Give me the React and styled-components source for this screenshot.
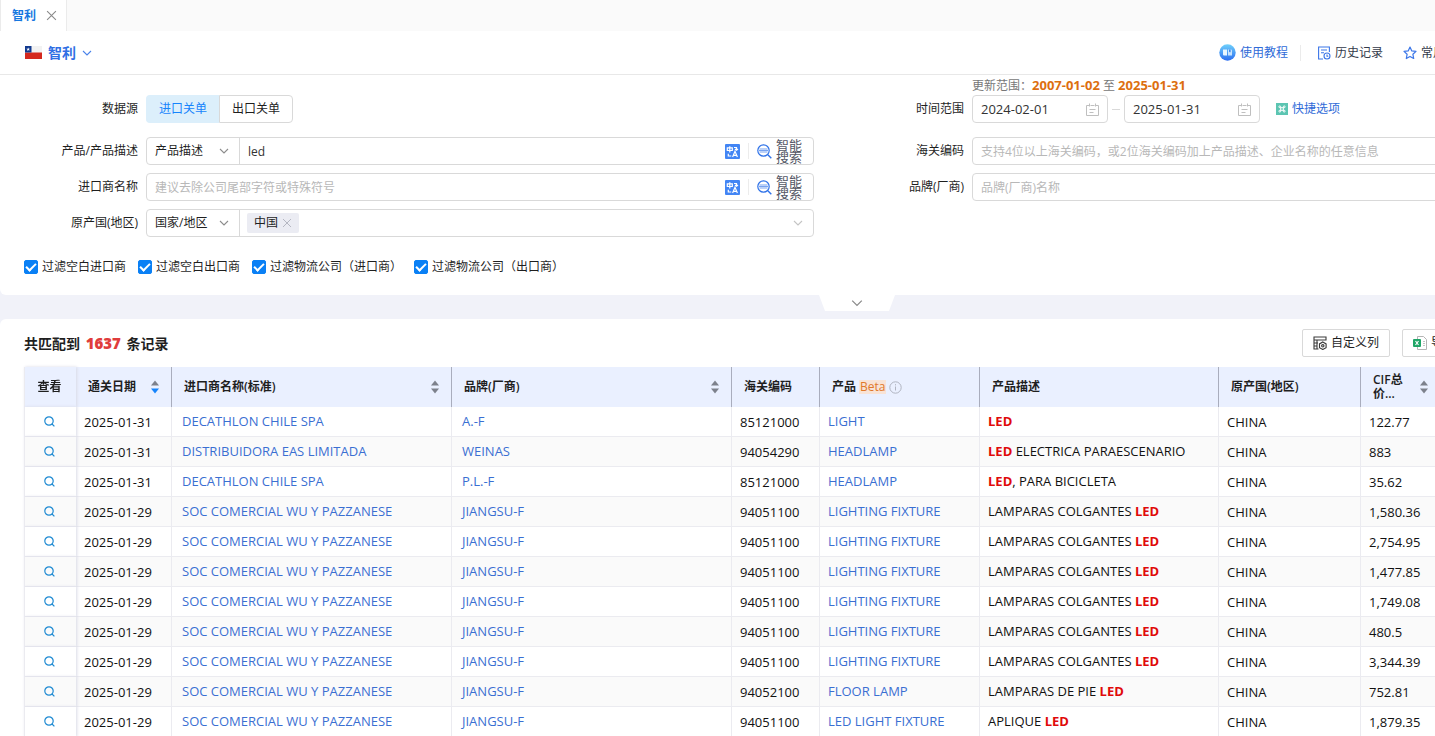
import { useState } from "react";
import styled, { createGlobalStyle, css } from "styled-components";

const records = [
  ["2025-01-31", "DECATHLON CHILE SPA", "A.-F", "85121000", "LIGHT", "[LED]", "122.77"],
  ["2025-01-31", "DISTRIBUIDORA EAS LIMITADA", "WEINAS", "94054290", "HEADLAMP", "[LED] ELECTRICA PARAESCENARIO", "883"],
  ["2025-01-31", "DECATHLON CHILE SPA", "P.L.-F", "85121000", "HEADLAMP", "[LED], PARA BICICLETA", "35.62"],
  ["2025-01-29", "SOC COMERCIAL WU Y PAZZANESE", "JIANGSU-F", "94051100", "LIGHTING FIXTURE", "LAMPARAS COLGANTES [LED]", "1,580.36"],
  ["2025-01-29", "SOC COMERCIAL WU Y PAZZANESE", "JIANGSU-F", "94051100", "LIGHTING FIXTURE", "LAMPARAS COLGANTES [LED]", "2,754.95"],
  ["2025-01-29", "SOC COMERCIAL WU Y PAZZANESE", "JIANGSU-F", "94051100", "LIGHTING FIXTURE", "LAMPARAS COLGANTES [LED]", "1,477.85"],
  ["2025-01-29", "SOC COMERCIAL WU Y PAZZANESE", "JIANGSU-F", "94051100", "LIGHTING FIXTURE", "LAMPARAS COLGANTES [LED]", "1,749.08"],
  ["2025-01-29", "SOC COMERCIAL WU Y PAZZANESE", "JIANGSU-F", "94051100", "LIGHTING FIXTURE", "LAMPARAS COLGANTES [LED]", "480.5"],
  ["2025-01-29", "SOC COMERCIAL WU Y PAZZANESE", "JIANGSU-F", "94051100", "LIGHTING FIXTURE", "LAMPARAS COLGANTES [LED]", "3,344.39"],
  ["2025-01-29", "SOC COMERCIAL WU Y PAZZANESE", "JIANGSU-F", "94052100", "FLOOR LAMP", "LAMPARAS DE PIE [LED]", "752.81"],
  ["2025-01-29", "SOC COMERCIAL WU Y PAZZANESE", "JIANGSU-F", "94051100", "LED LIGHT FIXTURE", "APLIQUE [LED]", "1,879.35"],
];

const filters = ["过滤空白进口商", "过滤空白出口商", "过滤物流公司（进口商）", "过滤物流公司（出口商）"];

const columnWidths = [52, 96, 280, 280, 88, 160, 239, 142, 80];

/* icons */

const Chevron = ({ color = "#8c8c8c", size = 10 }) => (
  <svg width={size} height={size} viewBox="0 0 10 10" fill="none" stroke={color} strokeWidth="1.1" aria-hidden="true">
    <path d="M1 3l4 4 4-4" />
  </svg>
);

const CloseIcon = ({ color, size }) => (
  <svg width={size} height={size} viewBox="0 0 10 10" fill="none" stroke={color} strokeWidth="1" aria-hidden="true">
    <path d="M1 1l8 8M9 1l-8 8" />
  </svg>
);

const ChileFlag = () => (
  <svg width="17" height="13" viewBox="0 0 17 13" aria-hidden="true">
    <path fill="#f2f2f2" d="M0 0h17v7H0z" />
    <path fill="#d4281e" d="M0 6.5h17V13H0z" />
    <path fill="#123a8f" d="M0 0h6.5v6.5H0z" />
    <path fill="#fff" d="M3.2 1.4l.5 1.3h1.4l-1.1.9.4 1.3-1.2-.8-1.2.8.4-1.3-1.1-.9h1.4z" />
  </svg>
);

const TutorialIcon = () => (
  <svg width="17" height="17" viewBox="0 0 17 17" aria-hidden="true">
    <defs>
      <linearGradient id="tutorial" x1="0" y1="0" x2="0" y2="1">
        <stop offset="0" stopColor="#6fd0fb" />
        <stop offset="1" stopColor="#2b6df0" />
      </linearGradient>
    </defs>
    <circle cx="8.5" cy="8.5" r="8.2" fill="url(#tutorial)" />
    <path fill="#e8f6ff" d="M4 5.5h4v6H5a1 1 0 0 1-1-1z" />
    <path fill="#e8f6ff" fillOpacity=".8" d="M9 5.5h3a1 1 0 0 1 1 1v5H9z" />
    <path fill="#3c86f2" d="M10 5.500h1.600v3l-.8-.7-.8.7z" />
  </svg>
);

const HistoryIcon = () => (
  <svg width="14" height="14" viewBox="0 0 14 14" fill="none" stroke="#3b76e8" strokeWidth="1.1" aria-hidden="true">
    <path d="M12.4 6V1H1.6v12H6M4 4h6M4 6.800h3" />
    <circle cx="10" cy="10" r="3" />
    <path d="M10 8.500V10.200h1.300" />
  </svg>
);

const StarIcon = () => (
  <svg width="14" height="14" viewBox="0 0 14 14" fill="none" stroke="#3b76e8" strokeWidth="1.2" strokeLinejoin="round" aria-hidden="true">
    <path d="M7 1l1.800 3.900 4.200.5-3.100 2.900.8 4.200L7 10.400l-3.700 2.100.8-4.200L1 5.400l4.200-.5z" />
  </svg>
);

const CalendarIcon = () => (
  <svg width="13" height="13" viewBox="0 0 13 13" fill="none" stroke="#bfbfbf" strokeWidth="1" aria-hidden="true">
    <path d="M3 2.500H.5v10h12v-10H10M4.500 2.500h4M3.500.5v3M9.500.5v3M3.500 6.500h6M3.500 9.500h4" />
  </svg>
);

const ShortcutIcon = () => (
  <svg width="12" height="12" viewBox="0 0 12 12" aria-hidden="true">
    <path fill="#5cc5b2" d="M0 0h12v12H0z" />
    <g fill="none" stroke="#fff" strokeWidth="1">
      <path d="M4.700 4.700h2.600v2.600H4.700z" />
      <path d="M4.700 4.700H3.900a.9.9 0 1 1 .8-.8zM7.300 4.700h.8a.9.9 0 1 0-.8-.8zM4.700 7.300h-.8a.9.9 0 1 0 .8.8zM7.300 7.300h.8a.9.9 0 1 1-.8.8z" />
    </g>
  </svg>
);

const TranslateIcon = () => (
  <svg width="15" height="15" viewBox="0 0 15 15" aria-hidden="true">
    <rect width="15" height="15" rx="1" fill="#4285f4" />
    <g fill="none" stroke="#fff" strokeWidth="1.2">
      <path d="M2.300 3.800h5v2.700h-5zM4.800 2.300V8.500M9 3.500h2.500V6M10 5l1.500 1.300L13 5M3.300 9.800v2.200h3" />
      <path d="M7.600 13L10 7.300 12.400 13M8.400 11.300h3.200" />
    </g>
  </svg>
);

const SmartSearchIcon = () => (
  <svg width="15" height="15" viewBox="0 0 15 15" fill="none" stroke="#2f72e8" aria-hidden="true">
    <circle cx="6.500" cy="6.500" r="5.700" strokeWidth="1.200" />
    <path strokeWidth="1.400" d="M10.800 10.800L14.300 14.300" />
    <path strokeWidth="1" d="M2.500 5h8M2 6.500h9M2.500 8h8" strokeOpacity=".65" />
  </svg>
);

const ColumnsIcon = () => (
  <svg width="14" height="14" viewBox="0 0 14 14" fill="none" stroke="#3a3a3a" strokeWidth="1.1" aria-hidden="true">
    <path d="M13 4.500V1H1v12h4.500M1 4h12M4 4v9M1 7h4M1 10h3.500" />
    <path d="M9.800 6l3.300 1.900v3.800L9.800 13.500 6.500 11.700V7.900z" />
    <circle cx="9.800" cy="9.800" r="1.200" />
  </svg>
);

const ExcelIcon = () => (
  <svg width="14" height="14" viewBox="0 0 14 14" aria-hidden="true">
    <path fill="#fff" stroke="#b5b5b5" d="M4.500.5h6l3 3v10h-9z" />
    <path stroke="#c4c4c4" d="M10 5.500h2M10 7.500h2M10 9.500h2" />
    <rect y="3" width="8" height="8" rx="1" fill="#1fa567" />
    <path stroke="#fff" strokeWidth="1.2" d="M2.500 5l3 4M5.500 5l-3 4" />
  </svg>
);

const InfoIcon = () => (
  <svg width="13" height="13" viewBox="0 0 13 13" fill="none" stroke="#b0b4c0" aria-hidden="true">
    <circle cx="6.500" cy="6.500" r="5.700" />
    <path d="M6.500 3.200v1.200M6.500 5.500v4" />
  </svg>
);

const SearchIcon = () => (
  <svg width="11" height="11" viewBox="0 0 11 11" fill="none" stroke="#1e8ad2" strokeWidth="1.2" aria-hidden="true">
    <circle cx="5" cy="5" r="4.200" />
    <path d="M8 8l2.400 2.400" />
  </svg>
);

const SortIcon = ({ active }) => (
  <svg width="8" height="14" viewBox="0 0 8 14" aria-hidden="true">
    <path fill="#7d818c" d="M4 .5l4 5H0z" />
    <path fill={active ? "#1684fc" : "#7d818c"} d="M4 13.500l4-5H0z" />
  </svg>
);

/* small composed parts */

const SmartInput = ({ id, prefix, value, placeholder }) => (
  <FieldBox>
    {prefix}
    <TextInput id={id} defaultValue={value} placeholder={placeholder} />
    <InputTools>
      <IconButton aria-label="翻译"><TranslateIcon /></IconButton>
      <ToolLine />
      <SmartButton>
        <SmartSearchIcon />
        <span>智能<br />搜索</span>
      </SmartButton>
    </InputTools>
  </FieldBox>
);

const PrefixSelect = ({ label, option }) => (
  <SelectWrap>
    <Select aria-label={label} defaultValue={option}>
      <option>{option}</option>
    </Select>
    <Chevron />
  </SelectWrap>
);

const DateField = ({ id, label, value }) => (
  <DateBox>
    <TextInput id={id} aria-label={label} defaultValue={value} $date />
    <CalendarIcon />
  </DateBox>
);

const Highlighted = ({ text }) =>
  text.split(/(\[.*?\])/).map((part, i) =>
    part.startsWith("[") ? <Mark key={i}>{part.slice(1, -1)}</Mark> : part
  );

const App = () => {
  const [source, setSource] = useState("import");

  return (
    <>
      <GlobalStyle />
      <Shell>
        <Page>
          <TabBar>
            <Tab>
              <a href="#chile">智利</a>
              <IconButton aria-label="关闭"><CloseIcon color="#8a8a8a" size={11} /></IconButton>
            </Tab>
          </TabBar>

          <Header>
            <CountryButton>
              <ChileFlag />
              智利
              <Chevron color="#4a83ea" />
            </CountryButton>
            <HeaderActions>
              <HeaderLink href="#tutorial" $blue><TutorialIcon />使用教程</HeaderLink>
              <HeaderLine />
              <HeaderLink href="#history"><HistoryIcon />历史记录</HeaderLink>
              <HeaderLink href="#saved"><StarIcon />常用</HeaderLink>
            </HeaderActions>
          </Header>

          <SearchPanel>
            <FormGrid>
              <FormColumn $offset>
                <FormRow $first>
                  <Label as="span">数据源</Label>
                  <Segment>
                    <SegmentButton $active={source === "import"} onClick={() => setSource("import")}>进口关单</SegmentButton>
                    <SegmentButton $active={source === "export"} onClick={() => setSource("export")}>出口关单</SegmentButton>
                  </Segment>
                </FormRow>
                <FormRow>
                  <Label htmlFor="product">产品/产品描述</Label>
                  <SmartInput id="product" value="led" prefix={<PrefixSelect label="产品字段" option="产品描述" />} />
                </FormRow>
                <FormRow>
                  <Label htmlFor="importer">进口商名称</Label>
                  <SmartInput id="importer" placeholder="建议去除公司尾部字符或特殊符号" />
                </FormRow>
                <FormRow>
                  <Label htmlFor="origin">原产国(地区)</Label>
                  <FieldBox>
                    <PrefixSelect label="地区类型" option="国家/地区" />
                    <Tag>
                      中国
                      <IconButton aria-label="移除中国"><CloseIcon color="#b5b7c2" size={10} /></IconButton>
                    </Tag>
                    <TextInput id="origin" />
                    <FieldArrow><Chevron color="#c4c4c4" /></FieldArrow>
                  </FieldBox>
                </FormRow>
              </FormColumn>

              <FormColumn>
                <UpdateNote>
                  更新范围：<b>2007-01-02</b> 至 <b>2025-01-31</b>
                </UpdateNote>
                <FormRow $first>
                  <Label htmlFor="from">时间范围</Label>
                  <DateRange>
                    <DateField id="from" value="2024-02-01" />
                    <Dash />
                    <DateField id="to" label="结束日期" value="2025-01-31" />
                    <ShortcutLink href="#shortcut"><ShortcutIcon />快捷选项</ShortcutLink>
                  </DateRange>
                </FormRow>
                <FormRow>
                  <Label htmlFor="hs">海关编码</Label>
                  <FieldBox>
                    <TextInput id="hs" placeholder="支持4位以上海关编码，或2位海关编码加上产品描述、企业名称的任意信息" />
                  </FieldBox>
                </FormRow>
                <FormRow>
                  <Label htmlFor="brand">品牌(厂商)</Label>
                  <FieldBox>
                    <TextInput id="brand" placeholder="品牌(厂商)名称" />
                  </FieldBox>
                </FormRow>
              </FormColumn>
            </FormGrid>

            <Filters>
              {filters.map((name) => (
                <CheckLabel key={name}>
                  <Checkbox type="checkbox" defaultChecked />
                  {name}
                </CheckLabel>
              ))}
            </Filters>
          </SearchPanel>

          <CollapseRow>
            <CollapseButton aria-label="展开"><Chevron size={12} /></CollapseButton>
          </CollapseRow>

          <Results>
            <ResultsBar>
              <Total>共匹配到 <strong>1637</strong> 条记录</Total>
              <ResultsActions>
                <ToolButton><ColumnsIcon />自定义列</ToolButton>
                <ToolButton><ExcelIcon />导出</ToolButton>
              </ResultsActions>
            </ResultsBar>

            <Table>
              <colgroup>
                {columnWidths.map((width, i) => <col key={i} style={{ width }} />)}
              </colgroup>
              <thead>
                <tr>
                  <HeadCell $fixed>查看</HeadCell>
                  <HeadCell><HeadInner>通关日期<SortIcon active /></HeadInner></HeadCell>
                  <HeadCell><HeadInner>进口商名称(标准)<SortIcon /></HeadInner></HeadCell>
                  <HeadCell><HeadInner>品牌(厂商)<SortIcon /></HeadInner></HeadCell>
                  <HeadCell>海关编码</HeadCell>
                  <HeadCell><HeadProduct>产品<Beta>Beta</Beta><InfoIcon /></HeadProduct></HeadCell>
                  <HeadCell>产品描述</HeadCell>
                  <HeadCell>原产国(地区)</HeadCell>
                  <HeadCell><HeadInner><span>CIF总<br />价...</span><SortIcon /></HeadInner></HeadCell>
                </tr>
              </thead>
              <tbody>
                {records.map(([date, importer, brand, code, product, description, price], i) => (
                  <Row key={i}>
                    <Cell $fixed><IconButton aria-label="查看"><SearchIcon /></IconButton></Cell>
                    <Cell>{date}</Cell>
                    <Cell $text $company><CellLink href="#importer">{importer}</CellLink></Cell>
                    <Cell $text $company><CellLink href="#brand">{brand}</CellLink></Cell>
                    <Cell>{code}</Cell>
                    <Cell $text><CellLink href="#product">{product}</CellLink></Cell>
                    <Cell $text><Highlighted text={description} /></Cell>
                    <Cell>CHINA</Cell>
                    <Cell>{price}</Cell>
                  </Row>
                ))}
              </tbody>
            </Table>
          </Results>
        </Page>
      </Shell>
    </>
  );
};

const GlobalStyle = createGlobalStyle`
  * {
    box-sizing: border-box;
  }
  body {
    margin: 0;
    background: #f1f2f9;
    color: #1f1f1f;
    font-family: "Open Sans", "Noto Sans CJK SC", sans-serif;
    font-size: 12px;
    line-height: 18px;
  }
  button, input, select {
    font: inherit;
    color: inherit;
  }
  a {
    color: inherit;
    text-decoration: none;
  }
  svg {
    display: block;
    flex: none;
  }
`;

const Shell = styled.div`
  height: 100vh;
  overflow: hidden;
`;

const Page = styled.div`
  min-width: 1714px;
`;

const IconButton = styled.button`
  display: inline-flex;
  align-items: center;
  padding: 0;
  border: 0;
  background: none;
  cursor: pointer;
`;

const TabBar = styled.nav`
  display: flex;
  height: 31px;
  background: #fafafa;
`;

const Tab = styled.div`
  display: flex;
  align-items: center;
  gap: 10px;
  padding: 0 9px 0 11px;
  border: solid #ebebeb;
  border-width: 0 1px;
  background: #fff;
  color: #1677e0;
  font-weight: 600;
`;

const Header = styled.header`
  display: flex;
  align-items: center;
  justify-content: space-between;
  height: 44px;
  padding-left: 25px;
  border-bottom: 1px solid #e8e8e8;
  background: #fff;
`;

const CountryButton = styled.button`
  display: flex;
  align-items: center;
  gap: 6px;
  padding: 0;
  border: 0;
  background: none;
  color: #2f6fe4;
  font-size: 14px;
  font-weight: 600;
`;

const HeaderActions = styled.div`
  display: flex;
  align-items: center;
  gap: 20px;
  flex: 0 0 495px;
`;

const HeaderLink = styled.a`
  display: flex;
  align-items: center;
  gap: 4px;
  color: ${({ $blue }) => ($blue ? "#2f6bd8" : "#333a4a")};
`;

const HeaderLine = styled.span`
  width: 1px;
  height: 16px;
  margin: 0 -4px 0 -8px;
  background: #ebebeb;
`;

const SearchPanel = styled.section`
  padding: 2px 38px 19px 24px;
  background: #fff;
  border-radius: 0 0 6px 6px;
`;

const FormGrid = styled.div`
  display: grid;
  grid-template-columns: 1fr 1fr;
`;

const FormColumn = styled.div`
  padding-top: ${({ $offset }) => ($offset ? "18px" : "0")};
  padding-right: 36px;
`;

const FormRow = styled.div`
  display: grid;
  grid-template-columns: 114px 1fr;
  align-items: center;
  gap: 8px;
  height: 28px;
  margin-bottom: ${({ $first }) => ($first ? "14px" : "8px")};
`;

const Label = styled.label`
  text-align: right;
`;

const UpdateNote = styled.div`
  height: 18px;
  padding-left: 122px;
  color: #777;
  b {
    color: #dd6f10;
    font-size: 13px;
    line-height: 16px;
  }
`;

const Segment = styled.div`
  display: flex;
`;

const SegmentButton = styled.button`
  height: 28px;
  padding: 0 12px;
  border: 1px solid #d9d9d9;
  background: #fff;
  &:first-child {
    border-right: 0;
    border-radius: 4px 0 0 4px;
  }
  &:last-child {
    border-radius: 0 4px 4px 0;
  }
  ${({ $active }) =>
    $active &&
    css`
      border-color: #dceffb;
      background: #dceffb;
      color: #1684fc;
    `}
`;

const FieldBox = styled.div`
  display: flex;
  align-items: center;
  height: 28px;
  border: 1px solid #d9d9d9;
  border-radius: 4px;
  background: #fff;
`;

const TextInput = styled.input`
  flex: 1;
  min-width: 0;
  height: 26px;
  padding: 0 8px;
  border: 0;
  outline: 0;
  background: none;
  color: #333;
  font-size: ${({ $date }) => ($date ? "13px" : "12px")};
  &::placeholder {
    color: #b8b8b8;
  }
`;

const SelectWrap = styled.div`
  display: grid;
  grid-template-columns: 1fr auto;
  align-items: center;
  width: 93px;
  height: 26px;
  padding-right: 10px;
  border-right: 1px solid #d9d9d9;
`;

const Select = styled.select`
  appearance: none;
  min-width: 0;
  padding: 0 0 0 8px;
  border: 0;
  outline: 0;
  background: none;
`;

const InputTools = styled.div`
  display: flex;
  align-items: center;
  gap: 8px;
  padding-right: 11px;
`;

const ToolLine = styled.span`
  width: 1px;
  height: 16px;
  background: #ececec;
`;

const SmartButton = styled(IconButton)`
  gap: 4px;
  color: #555866;
  font-size: 13px;
  line-height: 12px;
`;

const Tag = styled.span`
  display: flex;
  align-items: center;
  gap: 4px;
  height: 20px;
  margin-left: 7px;
  padding: 0 7px;
  border-radius: 2px;
  background: #ebecf3;
`;

const FieldArrow = styled.span`
  padding-right: 10px;
`;

const DateRange = styled.div`
  display: flex;
  align-items: center;
`;

const DateBox = styled(FieldBox)`
  width: 136px;
  padding-right: 8px;
`;

const Dash = styled.span`
  width: 8px;
  height: 1px;
  margin: 0 4px;
  background: #d9d9d9;
`;

const ShortcutLink = styled.a`
  display: flex;
  align-items: center;
  gap: 4px;
  margin-left: 16px;
  color: #2f6bd8;
`;

const Filters = styled.div`
  display: flex;
  gap: 12px;
  padding-top: 13px;
`;

const CheckLabel = styled.label`
  display: flex;
  align-items: center;
  gap: 4px;
`;

const Checkbox = styled.input`
  appearance: none;
  display: grid;
  place-items: center;
  width: 14px;
  height: 14px;
  margin: 0;
  border: 1px solid #d9d9d9;
  border-radius: 2px;
  &:checked {
    border-color: #0a80f5;
    background: #0a80f5;
  }
  &:checked::after {
    content: "";
    width: 8px;
    height: 4px;
    margin-bottom: 2px;
    border: solid #fff;
    border-width: 0 0 2px 2px;
    transform: rotate(-45deg);
  }
`;

const CollapseRow = styled.div`
  display: flex;
  justify-content: center;
  height: 24px;
`;

const CollapseButton = styled.button`
  display: grid;
  place-items: center;
  width: 76px;
  height: 16px;
  padding: 0;
  border: 0;
  background: #fff;
  clip-path: polygon(0 0, 100% 0, 70px 100%, 6px 100%);
`;

const Results = styled.section`
  padding: 10px 24px 0;
  background: #fff;
  border-radius: 6px 6px 0 0;
`;

const ResultsBar = styled.div`
  display: flex;
  align-items: center;
  justify-content: space-between;
  height: 28px;
  margin-bottom: 10px;
`;

const Total = styled.h2`
  margin: 0;
  font-size: 14px;
  font-weight: 600;
  strong {
    margin: 0 2px;
    color: #e03c3c;
    font-size: 15px;
  }
`;

const ResultsActions = styled.div`
  display: flex;
  gap: 12px;
  flex: 0 0 388px;
`;

const ToolButton = styled.button`
  display: flex;
  align-items: center;
  gap: 4px;
  height: 28px;
  padding: 0 10px;
  border: 1px solid #d9d9d9;
  border-radius: 2px;
  background: #fff;
`;

const Table = styled.table`
  width: 1417px;
  table-layout: fixed;
  border-collapse: separate;
  border-spacing: 0;
`;

const fixedCell = css`
  position: sticky;
  left: 0;
  z-index: 1;
  padding: 0 2px 0 0;
  border-right: 0;
  border-left: 1px solid #ebebf0;
  text-align: center;
  box-shadow: 1px 0 3px #d9dae6;
`;

const HeadCell = styled.th`
  height: 40px;
  padding: 0 12px;
  border-right: 1px solid #a9adbd;
  background: #eaf0ff;
  font-weight: 600;
  line-height: 14px;
  text-align: left;
  ${({ $fixed }) => $fixed && fixedCell}
`;

const HeadInner = styled.div`
  display: flex;
  align-items: center;
  justify-content: space-between;
`;

const HeadProduct = styled.div`
  display: flex;
  align-items: center;
  gap: 3px;
`;

const Beta = styled.span`
  padding: 0 1px;
  background: #f8e3d6;
  color: #e0782a;
  font-weight: 400;
`;

const Cell = styled.td`
  height: 30px;
  padding: 0 8px ${({ $text }) => ($text ? "2px" : "0")} ${({ $company }) => ($company ? "10px" : "8px")};
  border-right: 1px solid #ebebf0;
  border-bottom: 1px solid #ebebf0;
  background: #fff;
  color: #111;
  font-size: 13px;
  white-space: nowrap;
  ${({ $fixed }) => $fixed && fixedCell}
`;

const Row = styled.tr`
  &:nth-child(even) ${Cell} {
    background: #fafafa;
  }
`;

const CellLink = styled.a`
  color: #3a6fd2;
`;

const Mark = styled.b`
  color: #e00a0a;
`;

export default App;
